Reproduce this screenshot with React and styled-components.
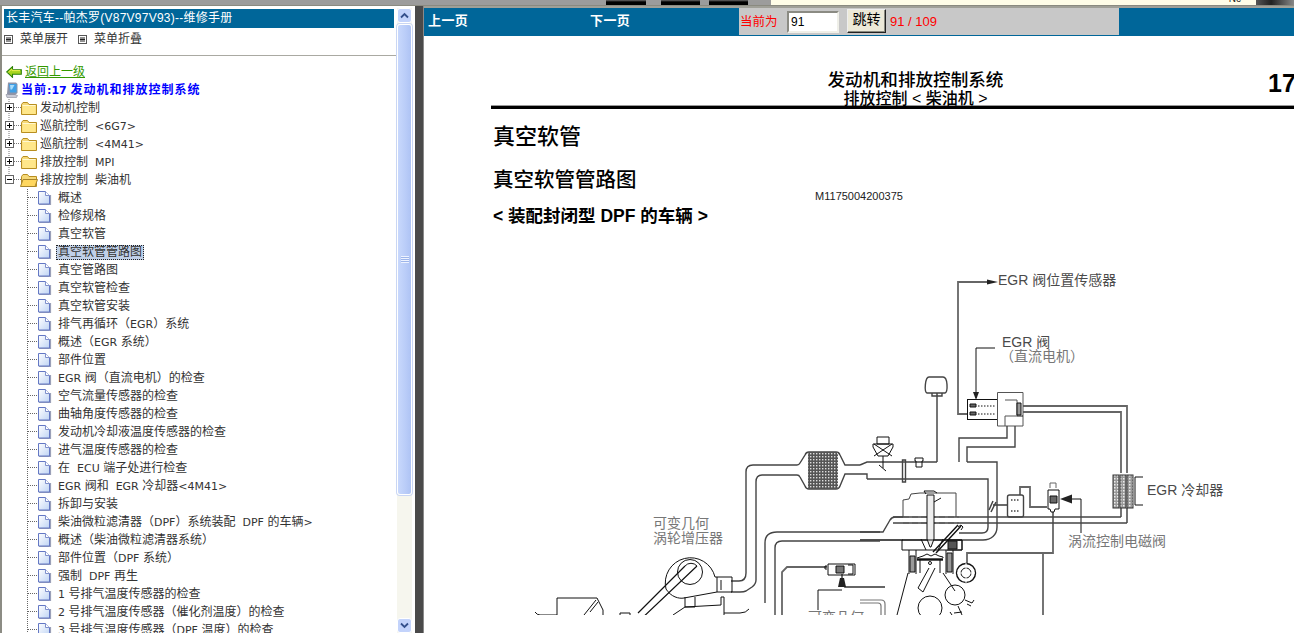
import React from "react";
import styled, { createGlobalStyle } from "styled-components";

const GlobalStyle = createGlobalStyle`
  html, body {
    margin: 0;
    padding: 0;
    height: 100%;
    overflow: hidden;
    background: #fff;
  }
`;

const FONT = `"DejaVu Sans", "Noto Sans CJK SC", sans-serif`;
const DOC_FONT = `"Liberation Sans", "Noto Sans CJK SC", sans-serif`;

const rootNodes = [
  { label: "发动机控制" },
  { label: "巡航控制  <6G7>" },
  { label: "巡航控制  <4M41>" },
  { label: "排放控制  MPI" },
  { label: "排放控制  柴油机", open: true },
];

const pages = [
  "概述",
  "检修规格",
  "真空软管",
  "真空软管管路图",
  "真空管路图",
  "真空软管检查",
  "真空软管安装",
  "排气再循环（EGR）系统",
  "概述（EGR 系统）",
  "部件位置",
  "EGR 阀（直流电机）的检查",
  "空气流量传感器的检查",
  "曲轴角度传感器的检查",
  "发动机冷却液温度传感器的检查",
  "进气温度传感器的检查",
  "在  ECU 端子处进行检查",
  "EGR 阀和  EGR 冷却器<4M41>",
  "拆卸与安装",
  "柴油微粒滤清器（DPF）系统装配  DPF 的车辆>",
  "概述（柴油微粒滤清器系统）",
  "部件位置（DPF 系统）",
  "强制  DPF 再生",
  "1 号排气温度传感器的检查",
  "2 号排气温度传感器（催化剂温度）的检查",
  "3 号排气温度传感器（DPF 温度）的检查",
];

const Page = styled.div`
  width: 1294px;
  height: 633px;
  display: flex;
  flex-direction: column;
  overflow: hidden;
  background: #9c9c9c;
`;

const TopStrip = styled.div`
  height: 6px;
  flex: none;
  display: flex;
  background: #9c9c9c;
  border-bottom: 1px solid #8a8a80;
  box-sizing: border-box;
`;

const StripGap = styled.div`
  width: ${(p) => p.$w}px;
  flex: none;
`;

const StripTab = styled.div`
  width: ${(p) => p.$w}px;
  flex: none;
  background: linear-gradient(#6a6a6a 0, #000 40%);
`;

const StripNote = styled.div`
  flex: 1;
  display: flex;
  justify-content: flex-end;
  align-items: flex-end;
  background: #fffde8;
  overflow: hidden;
`;

const NoteText = styled.span`
  font: 10px/10px ${DOC_FONT};
  color: #222;
  margin-right: 15px;
  transform: translateY(-1px);
`;

const NoteShade = styled.div`
  width: 38px;
  height: 100%;
  background: linear-gradient(90deg, #555, #222 40%, #888);
`;

const Frames = styled.div`
  flex: 1;
  min-height: 0;
  display: flex;
`;

const Sidebar = styled.div`
  width: 415px;
  flex: none;
  display: flex;
  background: #fff;
  border-left: 2px solid #8c8c84;
  box-sizing: border-box;
  overflow: hidden;
`;

const Menu = styled.div`
  flex: 1;
  min-width: 0;
  font: 12px/18px ${FONT};
  color: #333;
`;

const TitleBar = styled.div`
  height: 19px;
  margin: 3px 3px 0 2px;
  padding-left: 2px;
  background: #006699;
  color: #fff;
  font: 12px/19px "Liberation Sans", "Noto Sans CJK SC", sans-serif;
  letter-spacing: 0.25px;
`;

const MenuActions = styled.div`
  height: 28px;
  box-sizing: border-box;
  padding: 1px 0 0 2px;
  display: flex;
  align-items: flex-start;
  border-bottom: 1px solid #aaa9a2;
  line-height: 20px;
`;

const MenuAction = styled.span`
  display: inline-flex;
  align-items: center;
  gap: 7px;
  margin-right: 10px;
  height: 20px;
`;

const BackRow = styled.div`
  height: 18px;
  margin-top: 7px;
  padding-left: 4px;
  display: flex;
  align-items: center;
  gap: 3px;
`;

const BackLink = styled.a`
  color: #339900;
  text-decoration: underline;
`;

const CurrentRow = styled.div`
  height: 18px;
  padding-left: 3px;
  display: flex;
  align-items: center;
  gap: 3px;
  color: #0000ff;
  font-weight: bold;
  letter-spacing: 1px;
  white-space: pre;
`;

const TreeRow = styled.div`
  height: 18px;
  display: flex;
  align-items: center;
  white-space: pre;
`;

const Label = styled.span`
  margin-left: ${(p) => p.$indent}px;
  padding: 0 2px;
  height: 15px;
  line-height: 15px;
  ${(p) =>
    p.$selected &&
    `
    background: #c0d0e8;
    outline: 1px dotted #222;
    outline-offset: -1px;
  `}
`;

const Latin = styled.span`
  font-size: 11px;
  letter-spacing: 0;
`;

const Scrollbar = styled.div`
  width: 15px;
  flex: none;
  margin: 2px 3px 0 0;
  display: flex;
  flex-direction: column;
  gap: 1px;
  background: #f6f6ee;
`;

const ScrollButton = styled.div`
  height: 15px;
  flex: none;
  display: flex;
  align-items: center;
  justify-content: center;
  border: 1px solid #fff;
  border-radius: 3px;
  background: #c3d3fb;
  box-sizing: border-box;
  margin-top: ${(p) => (p.$pushed ? "auto" : "0")};
`;

const ScrollThumb = styled.div`
  height: 471px;
  flex: none;
  display: flex;
  align-items: center;
  justify-content: center;
  box-sizing: border-box;
  border: 1px solid #fff;
  border-radius: 3px;
  background: linear-gradient(90deg, #c8d8fc, #b9ccf8 60%, #aec3f4);
  box-shadow: 0 0 0 1px #c9d6f4;
`;

const Grip = styled.div`
  width: 8px;
  height: 7px;
  background: repeating-linear-gradient(#eef3ff 0 1px, #9db5ea 1px 2px);
`;

const Splitter = styled.div`
  width: 9px;
  flex: none;
  background: #4a4a4a;
  border-right: 1px solid #8a8a8a;
  box-sizing: border-box;
`;

const Viewer = styled.div`
  flex: 1;
  min-width: 0;
  display: flex;
  flex-direction: column;
  background: #fff;
  border-top: 2px solid #a0a098;
`;

const NavBar = styled.div`
  height: 28px;
  flex: none;
  display: flex;
  background: #006699;
  color: #fff;
  font: bold 13px/24px "Noto Sans CJK SC", sans-serif;
`;

const NavLink = styled.span`
  width: ${(p) => p.$w}px;
  flex: none;
  padding-left: 4px;
  box-sizing: border-box;
  letter-spacing: 0.4px;
`;

const Jump = styled.div`
  width: 380px;
  height: 27px;
  flex: none;
  display: flex;
  align-items: center;
  background: #c8c8c8;
  color: #ff0000;
  font: 13px/16px ${DOC_FONT};
`;

const JumpLabel = styled.span`
  width: 48px;
  flex: none;
  padding-left: 1px;
  box-sizing: border-box;
  font-size: 12.500px;
`;

const PageInput = styled.input`
  width: 52px;
  height: 22px;
  flex: none;
  box-sizing: border-box;
  margin: 0 8px 0 0;
  padding: 0 2px;
  border: 2px solid;
  border-color: #8b8b83 #efefe8 #efefe8 #8b8b83;
  background: #fff;
  color: #000;
  font: 12px ${DOC_FONT};
  outline: none;
`;

const JumpButton = styled.button`
  width: 39px;
  height: 24px;
  flex: none;
  box-sizing: border-box;
  margin: -2px 4px 0 0;
  padding: 0 0 4px;
  border: 1px solid #222;
  border-top-color: #eee;
  border-left-color: #eee;
  box-shadow: inset -1px -1px 0 #8a8a80;
  background: #ece9d8;
  color: #000;
  font: 14px/16px ${DOC_FONT};
`;

const DocPage = styled.div`
  flex: 1;
  min-height: 0;
  padding-left: 67px;
  overflow: hidden;
  color: #000;
  font-family: ${DOC_FONT};
`;

const DocHeader = styled.div`
  height: 70px;
  display: grid;
  grid-template-columns: 777px auto;
  border-bottom: 3px solid #000;
  box-shadow: 0 -1px 0 #999 inset;
`;

const DocTitles = styled.div`
  padding: 35px 0 0 72px;
  text-align: center;
  white-space: nowrap;
`;

const DocTitle = styled.div`
  font-size: ${(p) => p.$size}px;
  line-height: 18px;
  font-weight: 500;

  & + & {
    margin-top: 1px;
  }
`;

const ChapterNumber = styled.div`
  padding-top: 33px;
  font: bold 25px/28px "Liberation Sans", sans-serif;
`;

const SectionTitle = styled.h1`
  margin: 13px 0 0 2px;
  font-size: 22px;
  line-height: 30px;
  font-weight: 500;
`;

const SubTitle = styled.h2`
  margin: 14px 0 0 2px;
  font-size: 20.500px;
  line-height: 28px;
  font-weight: 500;
`;

const DocCode = styled.div`
  width: 736px;
  margin-top: -4px;
  text-align: center;
  font-size: 11px;
  line-height: 12px;
  color: #222;
`;

const Variant = styled.div`
  margin: 3px 0 0 2px;
  font-size: 17.500px;
  line-height: 22px;
  font-weight: bold;
  white-space: pre;
`;

const Diagram = styled.svg`
  display: block;
  width: 803px;
  height: 380px;
  margin-top: 8px;
`;

// latin runs sit a point smaller than the chinese in the menu
const MixedText = ({ text }) =>
  text
    .split(/([A-Za-z0-9<>: ]+)/)
    .map((part, i) => (i % 2 ? <Latin key={i}>{part}</Latin> : part));

const MenuIcon = () => (
  <svg width="9" height="9" viewBox="0 0 9 9">
    <rect x=".5" y=".5" width="8" height="8" fill="#fff" stroke="#555" />
    <path d="M2 3h5M2 4.500h5M2 6h5" stroke="#222" />
  </svg>
);

const BackIcon = () => (
  <svg width="16" height="12" viewBox="0 0 16 12">
    <path
      d="M.7 6 6.500.7v3h8.800v4.600H6.500v3z"
      fill="#a6d41e"
      stroke="#2a8008"
      strokeWidth="1.100"
    />
    <path d="M2.500 6 6 3v1.600h8" fill="none" stroke="#ecef50" />
  </svg>
);

const ComputerIcon = () => (
  <svg width="13" height="16" viewBox="0 0 13 16">
    <path d="M3 .5h8l1.500 1.500v9L10 13H4l-2-1z" fill="#8d94a8" />
    <path d="M4 2h7.500v8.500H5z" fill="#3f9fe6" />
    <path d="M5 3h4.500l-2.500 4.500H5.500z" fill="#a8dcfa" />
    <path d="M1 12.500h9l2.500 1-1 2H2z" fill="#c9cbd6" stroke="#777a8c" strokeWidth=".5" />
  </svg>
);

const Folder = ({ open }) => (
  <g>
    <path
      d="M19.500 6.500 21 4.500h4.500l1.500 2h7.500v10h-15z"
      fill="#f5d878"
      stroke="#b88e20"
    />
    {open ? (
      <path d="M18.500 16.500 21 9.500h14.500l-2.500 7z" fill="#ffd75e" stroke="#a8842a" />
    ) : (
      <>
        <path d="M20.500 8h13v8h-13z" fill="#ffe78a" />
        <path d="M20.500 7.500h13" stroke="#fff8d0" />
      </>
    )}
  </g>
);

const RootGlyph = ({ open }) => (
  <svg width="36" height="18" viewBox="0 1 36 18">
    <path
      d={open ? "M7 1v4" : "M7 1v18"}
      stroke="#777"
      strokeDasharray="1 1"
      fill="none"
    />
    <path d="M12 9.500h7" stroke="#777" strokeDasharray="1 1" />
    <rect x="3.500" y="5.500" width="8" height="8" fill="#fff" stroke="#666" />
    <path d={open ? "M5 9.500h5" : "M5 9.500h5M7.500 7v5"} stroke="#000" />
    <Folder open={open} />
  </svg>
);

const PageGlyph = () => (
  <svg width="50" height="18" viewBox="0 1 50 18">
    <defs>
      <linearGradient id="sheet" x1="0" y1="0" x2="1" y2="1">
        <stop offset="0" stopColor="#ffffff" />
        <stop offset="1" stopColor="#bfd4f4" />
      </linearGradient>
    </defs>
    <path d="M25.500 1v18M26 9.500h10" stroke="#666" strokeDasharray="1 1" />
    <path d="M37 16.500h11.500V7" fill="none" stroke="#9aa0b8" strokeWidth="1.200" />
    <path d="M36.500 3.500h7l4 4v8.500h-11z" fill="url(#sheet)" stroke="#6478c4" />
    <path d="M43.500 3.500v4h4" fill="#fff" stroke="#7f90cc" />
  </svg>
);

const Chevron = ({ up }) => (
  <svg width="9" height="7" viewBox="0 0 9 7">
    <path
      d={up ? "M1 5.500 4.500 2 8 5.500" : "M1 1.500 4.500 5 8 1.500"}
      fill="none"
      stroke="#34508c"
      strokeWidth="1.800"
    />
  </svg>
);

const Pipes = styled.g`
  fill: none;
  stroke: #444;
  stroke-width: 1.4;
`;

const HeavyPipes = styled.g`
  fill: none;
  stroke: #666;
  stroke-width: 1.8;
`;

const Inked = styled.g`
  fill: none;
  stroke: #111;
  stroke-width: 1;
`;

const CalloutEn = styled.text`
  font: 14px "Liberation Sans", "Noto Sans CJK SC", sans-serif;
  fill: #4a4a4a;
`;

const CalloutCn = styled.text`
  font: 14px "Noto Sans CJK SC", sans-serif;
  fill: #777;
`;

// traced over the screenshot, coordinates are in page pixels (see viewBox)
const EngineDiagram = () => (
  <Diagram viewBox="491 235 803 380">
    <defs>
      <pattern id="mesh" width="3" height="3" patternUnits="userSpaceOnUse">
        <rect width="3" height="3" fill="#555" />
        <rect width="1.400" height="1.400" fill="#ddd" />
      </pattern>
      <pattern id="fins" width="3" height="3" patternUnits="userSpaceOnUse">
        <rect width="3" height="3" fill="#999" />
        <rect width="1.500" height="1.500" x="1" y="1" fill="#eee" />
      </pattern>
    </defs>

    <CalloutEn x="998" y="285">EGR 阀位置传感器</CalloutEn>
    <CalloutEn x="1002" y="347">EGR 阀</CalloutEn>
    <CalloutCn x="1000" y="361">（直流电机）</CalloutCn>
    <CalloutEn x="1147" y="495">EGR 冷却器</CalloutEn>
    <CalloutCn x="1068" y="546">涡流控制电磁阀</CalloutCn>
    <CalloutCn x="653" y="528">可变几何</CalloutCn>
    <CalloutCn x="653" y="543">涡轮增压器</CalloutCn>
    <CalloutCn x="808" y="622">可变几何</CalloutCn>

    {/* EGR valve */}
    <HeavyPipes>
      <path d="M967 414h-9V282h30" />
      <path d="M1023 406h104v67M1023 412h98v61" />
      <path d="M1121 508v9M1127 508v15" />
      <path d="M937 393v69" />
      <path d="M1053 512v41h-86v10M1043 553v62" />
      <path d="M1020 495v-8h10v20h17" />
      <path d="M827 567h-40l-5 5v43" />
      <path d="M842 574v9l3 4h40" />
    </HeavyPipes>
    <path d="M987 279.500 998 282l-11 2.500z" fill="#222" />
    <Inked>
      <path d="M995 348h-19v50" />
      <rect x="967.500" y="399.500" width="30" height="20" />
      <path d="M970 404h6v3h-6zM970 412h6v3h-6z" fill="#666" />
      <path d="M978 406h18M978 414h18" strokeDasharray="1.500 1.500" />
      <path d="M997.500 392.500h25.500v33.500h-25.500zM1005 400h12v16h-12v10" stroke="#555" />
      <path d="M1017 403h4v12h-4z" fill="#999" />
      <path d="M1017 416h6" />
      <path d="M1072 499h9v34" />
      <path d="M842 590h-24v20" />
    </Inked>
    <path d="M973 392h6l-3 8z" fill="#222" />
    <path d="M840 578h4l2 9h-8z" fill="#222" />
    <path d="M1072 494.500v9l-12-4.500z" fill="#222" />

    {/* intake and exhaust runs */}
    <Pipes>
      <path d="M927 393c-3-1-2-16 2-16h14c5 0 5 15 2 16zM932 393v3h10v-3M935 396h5" />
      <path d="M959 462v-24h48v-12M967 462v-15h48v-21" />
      <path d="M937 462H867l-7 3M967 462h30v65c0 8-6 13-14 13H860" />
      <path d="M860 465h-15l-5-10q-1-3-4-3h-27q-3 0-4 3l-5 8q-1 2-3 2h-44q-7 0-7 7v101q0 8-7 8h-8" />
      <path d="M867 479v-5h-22l-5 12q-1 3-4 3h-27q-3 0-4-3l-5-9q-1-2-3-2h-35q-6 0-6 7v98q0 4-4 7l-6 4q-2 1-6 1h-9" />
      <path d="M867 479h121v48q0 6-6 6h-23" />
      <path d="M880 532H777q-12 0-12 11v60M880 541h-98q-7 0-7 7v67" />
      <path d="M893 517h228M893 523h234" />
      <path d="M860 532h23l7-12q2-3 5-3h8M860 540h43" />
      <path d="M902.500 460h3v22h-3z" />
      <path d="M1008 505h-15" strokeWidth="1.600" />
      <path d="M989 510l4-9M991 512l5-10" strokeWidth="1.500" />
      <path d="M1007.500 497q0-2 2-2h12q2 0 2 2v18q0 2-2 2h-12q-2 0-2-2z" />
      <path d="M1011 500h8M1011 511h8" strokeDasharray="1.500 1.500" />
    </Pipes>

    {/* DPF */}
    <rect x="808" y="452" width="30" height="37" fill="url(#mesh)" />

    {/* throttle */}
    <Inked stroke="#333">
      <path d="M877 437h12v7h-12z" />
      <path d="M873 444h20v3l-5 9h-10l-5-9z" />
      <path d="M874 444l18 12M892 444l-18 12" />
      <path d="M883 456v12M879 465l7 6" />
      <path d="M915 458h8v3h-1v6h-6v-6h-1z" />
    </Inked>

    {/* turbo */}
    <Inked stroke="#333">
      <path d="M717 577v15l-33 6c-5 1-13-1-18-9a25 25 0 1 1 49-12z" />
      <circle cx="690" cy="572" r="12.500" />
      <path d="M717 577h15v15h-15M721 580v10" />
      <path d="M697 566l-59 56M685 566l-47 47" strokeWidth="1.200" />
      <path d="M685 566a8 8 0 0 1 12 0" />
      <path d="M685 597v10M695 597v10M685 607h10M673 615l12-8 36-2v-8h3v18" />
      <path d="M724 613h16q6 0 9-4" />
      <path d="M557 615v-17h40l6 12v5" />
      <path d="M584 615l12-15M590 612l8-10M535 612q2 3 5 3h17M620 615v-2h10v2" />
    </Inked>

    {/* VGT solenoid */}
    <Inked>
      <path d="M828 564h27v11h-27z" />
      <path d="M836 566h8v7h-8z" fill="#777" />
      <path d="M848 565h5v9h-5M827 566h-2v3h2" />
    </Inked>

    {/* cooler */}
    <rect x="1113" y="475" width="6" height="33" fill="url(#fins)" stroke="#333" />
    <rect x="1120" y="475" width="6" height="33" fill="url(#fins)" stroke="#333" />
    <rect x="1127" y="475" width="6" height="33" fill="url(#fins)" stroke="#333" />
    <Inked>
      <path d="M1143 477h-8v28h8" />
    </Inked>

    {/* turbo control solenoid */}
    <Inked>
      <path d="M1048 490h11v19h-4l-1 3h-3l-1-3h-2z" />
      <path d="M1050 496h7v7h-7z" fill="#666" />
      <path d="M1050 488v-5h6v5" stroke="#666" />
    </Inked>

    {/* cylinder */}
    <Inked>
      <path d="M903 517v-17l6-1 2-5 9-1h36v24" stroke="#444" />
      <path d="M903 517h56" stroke="#555" strokeDasharray="6 3" strokeWidth="1.200" />
      <path d="M903 523h56" stroke="#555" strokeDasharray="6 3" strokeWidth="1.200" />
      <path d="M927 495h7v44l-3 8h-1l-3-8z" fill="#eee" />
      <path d="M926 494l-2-3h10l3 2M934 502l7-4" />
      <path d="M933 552l25-27M936 553l25-27" strokeWidth="1.400" />
      <path d="M958 527l3-2 2 2-2 3" />
      <path d="M902 540h60v10h-60zM947 540h15v10h-15" />
      <path d="M948 541h9v8h-9z" fill="#555" />
      <path d="M921 539l5 11M943 539l-5 11" />
      <path d="M917 558l6-2 4-2 4 2 4-2 4 2 4 1v1" />
      <path d="M917 559.500h26" strokeWidth="2.400" />
      <path d="M920 560v13M940 560v13" />
      <path d="M909 550v24M916 550v24M946 550v24M953 550v24" />
      <path d="M910 556h5v16h-5zM947 553h5v19h-5z" fill="#999" />
      <circle cx="930" cy="563" r="1.500" />
      <path d="M929 568l-11 20 5 4 12-24" />
      <circle cx="930" cy="608" r="12" />
      <path d="M908 573l-11 42M943 573l12 18M962 615l-4-9" />
      <circle cx="955" cy="595" r="10" />
      <path d="M965 600l7 3 2-3M967 604l4 2" />
      <circle cx="966" cy="573" r="9.500" strokeWidth="1.400" />
      <circle cx="966" cy="573" r="5" />
      <path d="M957 573h18M966 563v20" stroke="#fff" strokeWidth="1" />
      <path d="M950 612l2 3M954 613l8-1" />
      <path d="M860 600h21q4 0 4 4v11M860 603h18q3 0 3 3v9" stroke="#777" strokeWidth="1.200" />
    </Inked>
  </Diagram>
);

export default function App() {
  return (
    <Page>
      <GlobalStyle />
      <TopStrip>
        <StripGap $w={606} />
        <StripTab $w={40} />
        <StripGap $w={15} />
        <StripTab $w={39} />
        <StripGap $w={9} />
        <StripTab $w={39} />
        <StripGap $w={23} />
        <StripNote>
          <NoteText>Nc</NoteText>
          <NoteShade />
        </StripNote>
      </TopStrip>
      <Frames>
        <Sidebar>
          <Menu>
            <TitleBar>长丰汽车--帕杰罗(V87V97V93)--维修手册</TitleBar>
            <MenuActions>
              <MenuAction>
                <MenuIcon />
                菜单展开
              </MenuAction>
              <MenuAction>
                <MenuIcon />
                菜单折叠
              </MenuAction>
            </MenuActions>
            <BackRow>
              <BackIcon />
              <BackLink>返回上一级</BackLink>
            </BackRow>
            <CurrentRow>
              <ComputerIcon />
              <span>
                <MixedText text="当前:17 发动机和排放控制系统" />
              </span>
            </CurrentRow>
            {rootNodes.map((node) => (
              <TreeRow key={node.label}>
                <RootGlyph open={node.open} />
                <Label $indent={0}>
                  <MixedText text={node.label} />
                </Label>
              </TreeRow>
            ))}
            {pages.map((title, i) => (
              <TreeRow key={i}>
                <PageGlyph />
                <Label $indent={4} $selected={i === 3}>
                  <MixedText text={title} />
                </Label>
              </TreeRow>
            ))}
          </Menu>
          <Scrollbar>
            <ScrollButton>
              <Chevron up />
            </ScrollButton>
            <ScrollThumb>
              <Grip />
            </ScrollThumb>
            <ScrollButton $pushed>
              <Chevron />
            </ScrollButton>
          </Scrollbar>
        </Sidebar>
        <Splitter />
        <Viewer>
          <NavBar>
            <NavLink $w={162}>上一页</NavLink>
            <NavLink $w={153}>下一页</NavLink>
            <Jump>
              <JumpLabel>当前为</JumpLabel>
              <PageInput defaultValue="91" />
              <JumpButton>跳转</JumpButton>
              <span>91 / 109</span>
            </Jump>
          </NavBar>
          <DocPage>
            <DocHeader>
              <DocTitles>
                <DocTitle $size={17.6}>发动机和排放控制系统</DocTitle>
                <DocTitle $size={16}>排放控制 &lt; 柴油机 &gt;</DocTitle>
              </DocTitles>
              <ChapterNumber>17</ChapterNumber>
            </DocHeader>
            <SectionTitle>真空软管</SectionTitle>
            <SubTitle>真空软管管路图</SubTitle>
            <DocCode>M1175004200375</DocCode>
            <Variant>&lt; 装配封闭型 DPF 的车辆 &gt;</Variant>
            <EngineDiagram />
          </DocPage>
        </Viewer>
      </Frames>
    </Page>
  );
}
